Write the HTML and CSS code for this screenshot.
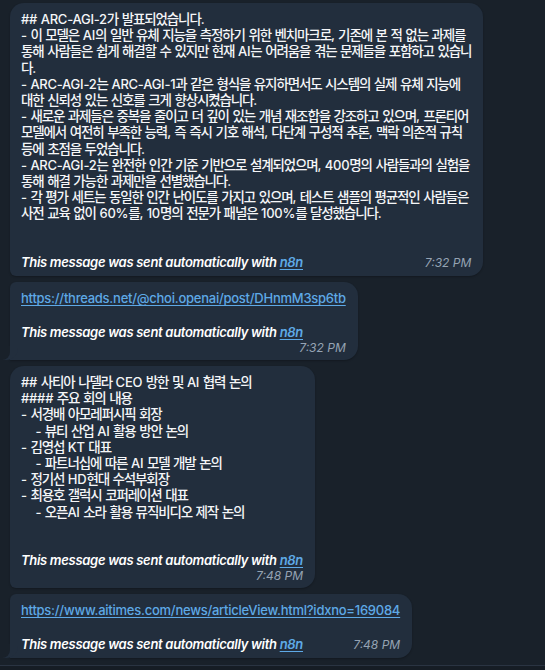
FILE: index.html
```html
<!DOCTYPE html>
<html lang="ko">
<head>
<meta charset="utf-8">
<title>Chat</title>
<link rel="stylesheet" href="styles.css">
</head>
<body>
<div class="screen">
  <div class="chat">
    <div class="bubble first">
      <div class="txt spaced">## ARC-AGI-2가 발표되었습니다.
- 이 모델은 AI의 일반 유체 지능을 측정하기 위한 벤치마크로, 기존에 본 적 없는 과제를
통해 사람들은 쉽게 해결할 수 있지만 현재 AI는 어려움을 겪는 문제들을 포함하고 있습니
다.
- ARC-AGI-2는 ARC-AGI-1과 같은 형식을 유지하면서도 시스템의 실제 유체 지능에
대한 신뢰성 있는 신호를 크게 향상시켰습니다.
- 새로운 과제들은 중복을 줄이고 더 깊이 있는 개념 재조합을 강조하고 있으며, 프론티어
모델에서 여전히 부족한 능력, 즉 즉시 기호 해석, 다단계 구성적 추론, 맥락 의존적 규칙
등에 초점을 두었습니다.
- ARC-AGI-2는 완전한 인간 기준 기반으로 설계되었으며, 400명의 사람들과의 실험을
통해 해결 가능한 과제만을 선별했습니다.
- 각 평가 세트는 동일한 인간 난이도를 가지고 있으며, 테스트 샘플의 평균적인 사람들은
사전 교육 없이 60%를, 10명의 전문가 패널은 100%를 달성했습니다.</div>
      <div class="meta">
        <span class="auto">This message was sent automatically with <a class="link" href="#">n8n</a></span>
        <span class="time">7:32 PM</span>
      </div>
    </div>
    <div class="bubble last">
      <div class="txt single"><a class="link" href="#">https://threads.net/@choi.openai/post/DHnmM3sp6tb</a></div>
      <div class="auto">This message was sent automatically with <a class="link" href="#">n8n</a></div>
      <div class="time own">7:32 PM</div>
    </div>
    <div class="bubble first">
      <div class="txt spaced">## 사티아 나델라 CEO 방한 및 AI 협력 논의
#### 주요 회의 내용
- 서경배 아모레퍼시픽 회장
    - 뷰티 산업 AI 활용 방안 논의
- 김영섭 KT 대표
    - 파트너십에 따른 AI 모델 개발 논의
- 정기선 HD현대 수석부회장
- 최용호 갤럭시 코퍼레이션 대표
    - 오픈AI 소라 활용 뮤직비디오 제작 논의</div>
      <div class="auto">This message was sent automatically with <a class="link" href="#">n8n</a></div>
      <div class="time own">7:48 PM</div>
    </div>
    <div class="bubble last">
      <div class="txt single"><a class="link" href="#">https://www.aitimes.com/news/articleView.html?idxno=169084</a></div>
      <div class="meta">
        <span class="auto">This message was sent automatically with <a class="link" href="#">n8n</a></span>
        <span class="time">7:48 PM</span>
      </div>
    </div>
  </div>
  <div class="composer-edge"></div>
</div>
<script src="script.js"></script>
</body>
</html>
```

FILE: styles.css
```css
* { box-sizing: border-box; }

html, body {
  margin: 0;
  padding: 0;
  background: #19212a;
}

.screen {
  width: 545px;
  height: 670px;
  display: flex;
  flex-direction: column;
  overflow: hidden;
  font-family: Inter, "Noto Sans CJK KR", sans-serif;
  font-size: 13px;
  font-weight: 500;
  letter-spacing: -0.25px;
  color: #f5f6f8;
}

.chat {
  flex: 1;
  display: flex;
  flex-direction: column;
  align-items: flex-start;
  gap: 6px;
  padding: 3px 0 0 10px;
}

.bubble {
  position: relative;
  background: #222e3d;
  padding: 8px 12px 5px 11px;
  border-radius: 14px;
  line-height: 16.2px;
  box-shadow: 0 1px 2px rgba(0, 0, 0, 0.25);
}

.bubble.first { border-bottom-left-radius: 6px; }
.bubble.last { border-top-left-radius: 6px; border-bottom-left-radius: 0; }

.bubble.last::before {
  content: "";
  position: absolute;
  left: -8px;
  bottom: 0;
  width: 16px;
  height: 14px;
  background: #222e3d;
  border-bottom-right-radius: 12px;
}

.bubble.last::after {
  content: "";
  position: absolute;
  left: -10px;
  bottom: 0;
  width: 10px;
  height: 14px;
  background: #19212a;
  border-bottom-right-radius: 8px;
}

.txt {
  white-space: pre;
  word-spacing: 0.4px;
}

.txt.spaced { margin-bottom: 32.4px; }
.txt.single { margin-bottom: 16.2px; line-height: 17.4px; }

.ko {
  line-height: 13px;
  font-family: "Noto Sans CJK KR", sans-serif;
  font-size: 13.5px;
  font-weight: 500;
  letter-spacing: -1.15px;
}

.link {
  color: #5ea9e6;
  text-decoration: underline;
  text-underline-offset: 2px;
}

.auto {
  font-style: italic;
  font-weight: 600;
  letter-spacing: -0.3px;
  color: #ffffff;
}

.meta {
  display: flex;
  justify-content: space-between;
  align-items: baseline;
  gap: 24px;
}

.time {
  font-style: italic;
  font-weight: 400;
  font-size: 12px;
  letter-spacing: 0;
  color: #95a3b3;
}

.time.own {
  align-self: flex-end;
  text-align: right;
  line-height: 15px;
}

.composer-edge {
  height: 5px;
  border-top: 1px solid #2a3442;
  background: #161d25;
}
```

FILE: script.js
```js
document.querySelectorAll('.txt').forEach(function (el) {
  var walker = document.createTreeWalker(el, NodeFilter.SHOW_TEXT);
  var nodes = [];
  while (walker.nextNode()) nodes.push(walker.currentNode);
  nodes.forEach(function (n) {
    var parts = n.nodeValue.split(/([\uAC00-\uD7A3]+)/);
    if (parts.length < 2) return;
    var frag = document.createDocumentFragment();
    parts.forEach(function (p, i) {
      if (!p) return;
      if (i % 2) {
        var s = document.createElement('span');
        s.className = 'ko';
        s.textContent = p;
        frag.appendChild(s);
      } else {
        frag.appendChild(document.createTextNode(p));
      }
    });
    n.parentNode.replaceChild(frag, n);
  });
});
```
